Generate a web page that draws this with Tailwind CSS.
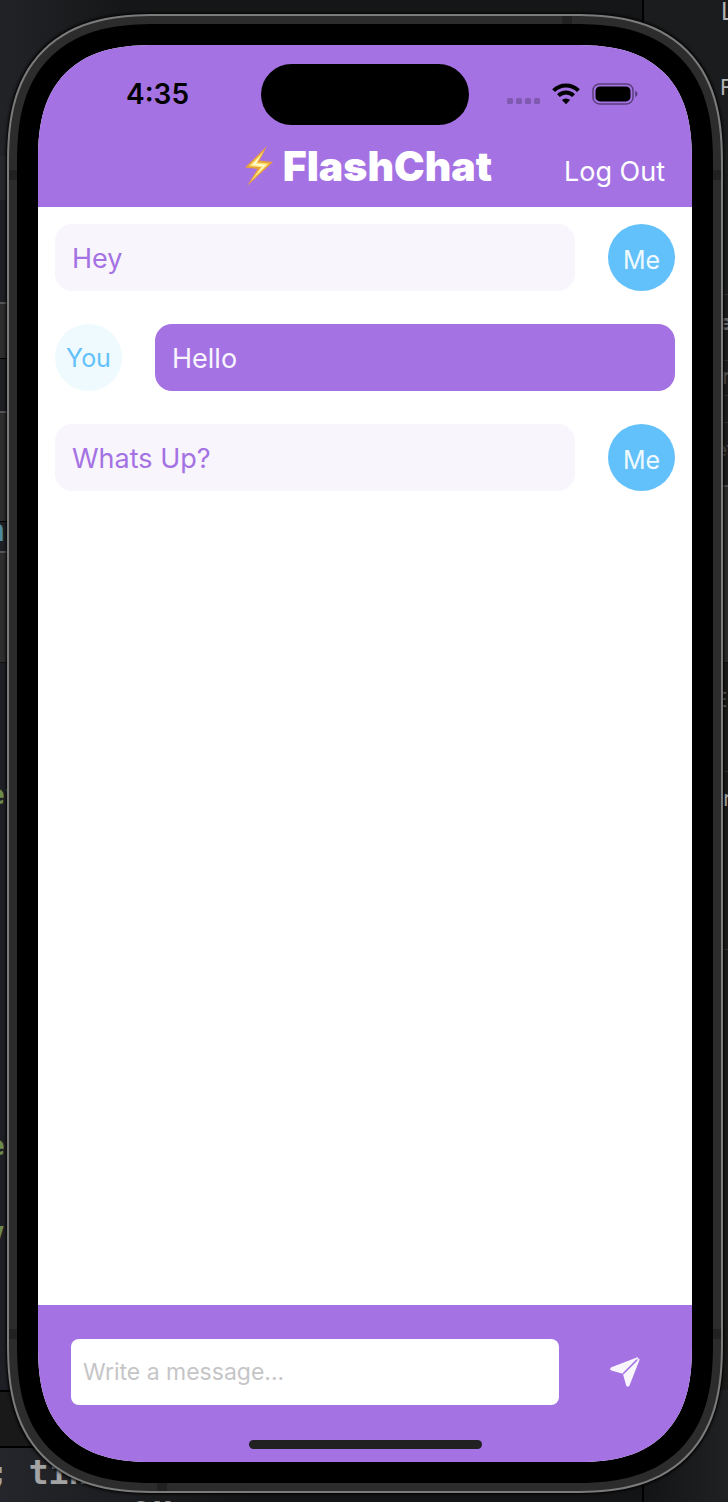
<!DOCTYPE html>
<html lang="en">
<head>
<meta charset="utf-8">
<meta name="viewport" content="width=device-width, initial-scale=1">
<title>FlashChat</title>
<script src="https://cdn.jsdelivr.net/npm/@tailwindcss/browser@4"></script>
</head>
<body class="bg-[#17181a] font-['Inter',sans-serif]">
<div class="relative isolate flex min-h-screen flex-col overflow-hidden pt-[14px] pr-[5px] pb-[9px] pl-[7px]">

  <!-- Editor windows behind the simulator -->
  <div class="absolute inset-0 -z-10 flex justify-between overflow-hidden bg-[#141516] text-[24px] leading-none" aria-hidden="true">
    <div class="flex w-[642px] flex-col">
      <div class="h-[156px] bg-linear-to-r from-[#222327] to-[#151617] to-20%"></div>
      <div class="h-[44px] bg-[#26272b]"></div>
      <div class="h-[102px] bg-[#1e1f24]"></div>
      <div class="h-[56px] border-t-2 border-[#555] bg-[#2d2d2d]"></div>
      <div class="h-[53px] border-t border-black bg-[#1e1f22]"></div>
      <div class="h-[110px] border-t-2 border-[#555] bg-[#2d2d2d]"></div>
      <div class="h-[30px] border-t border-black bg-[#1e1f24]"></div>
      <div class="h-[111px] border-t-2 border-[#555] bg-[#2d2d2d]"></div>
      <div class="h-[728px] border-t border-[#111] bg-[#1e1f25]"></div>
      <div class="h-[56px] border-t-2 border-black bg-[#191919]"></div>
      <div class="flex-1 border-t-2 border-black bg-linear-to-r from-[#25262b] to-[#131415] to-40%"></div>
    </div>
    <div class="flex flex-1 flex-col border-l-2 border-black">
      <div class="h-[294px] bg-[#1b1c1d]"></div>
      <div class="h-[66px] border-t border-[#2e2e2e] bg-[#1c1c1e]"></div>
      <div class="h-[35px] border-t border-[#2e2e2e] bg-[#1c1c1e]"></div>
      <div class="h-[27px] border-t border-[#2e2e2e] bg-[#1c1c1e]"></div>
      <div class="h-[63px] border-t border-[#2e2e2e] bg-[#1c1c1e]"></div>
      <div class="h-[177px] border-t-2 border-[#4a4a4a] bg-[#2b2b2a]"></div>
      <div class="h-[109px] border-t border-[#111] bg-[#191918]"></div>
      <div class="h-[178px] border-t border-[#2e2e2e] bg-[#191918]"></div>
      <div class="h-[441px] border-t border-[#2e2e2e] bg-[#191918]"></div>
      <div class="flex-1 bg-linear-to-r from-[#131415] to-[#202123]"></div>
    </div>
    <span class="absolute top-[516px] -left-[13px] font-['DejaVu_Sans_Mono',monospace] text-[30px] font-bold text-[#4d8ba3]">n</span>
    <span class="absolute top-[782px] -left-[11px] font-['DejaVu_Sans_Mono',monospace] text-[26px] font-bold text-[#6d8a4d]">ev</span>
    <span class="absolute top-[1133px] -left-[11px] font-['DejaVu_Sans_Mono',monospace] text-[26px] font-bold text-[#6d8a4d]">e</span>
    <span class="absolute top-[1219px] -left-[11px] font-['DejaVu_Sans_Mono',monospace] text-[26px] font-bold text-[#6d8a4d]">v</span>
    <span class="absolute top-[1456px] -left-[11px] font-['DejaVu_Sans_Mono',monospace] text-[33px] font-bold whitespace-pre text-[#a3a3a3]">; tin</span>
    <span class="absolute top-[1491px] left-[130px] font-['DejaVu_Sans_Mono',monospace] text-[36px] font-bold text-[#8c8c8c]">ou</span>
    <span class="absolute top-0 left-[721px] text-[#b5b5b5]">L</span>
    <span class="absolute top-[76px] left-[720px] text-[22px] text-[#b5b5b5]">F</span>
    <span class="absolute top-[311px] left-[719px] text-[22px] font-bold text-[#6a6a6a]">e</span>
    <span class="absolute top-[365px] left-[722px] text-[22px] text-[#565656]">r</span>
    <span class="absolute top-[438px] left-[714px] text-[22px] text-[#565656]">et</span>
    <span class="absolute top-[690px] left-[715px] text-[20px] text-[#777]">En</span>
    <span class="absolute top-[787px] left-[723px] text-[22px] text-[#aaa]">r</span>
  </div>

  <!-- Device body -->
  <div class="relative flex flex-1 flex-col rounded-[122px] bg-[#7b7b7b] p-[2px] shadow-[0_0_3px_1px_#000] supports-[corner-shape:squircle]:rounded-[150px] supports-[corner-shape:squircle]:[corner-shape:superellipse(1.35)]">
    <div class="flex flex-1 flex-col rounded-[120px] bg-[#2c2c2c] p-[8px] supports-[corner-shape:squircle]:rounded-[148px] supports-[corner-shape:squircle]:[corner-shape:superellipse(1.35)]">
      <div class="flex flex-1 flex-col rounded-[112px] bg-black p-[21px] supports-[corner-shape:squircle]:rounded-[140px] supports-[corner-shape:squircle]:[corner-shape:superellipse(1.35)]">
        <div class="flex flex-1 flex-col overflow-hidden rounded-[92px] bg-white supports-[corner-shape:squircle]:rounded-[117px] supports-[corner-shape:squircle]:[corner-shape:superellipse(1.35)]">

          <header class="bg-[#a472e3]">
            <div class="grid grid-cols-[1fr_auto_1fr] items-center pt-[19px]">
              <time class="pb-[2px] pl-[88px] text-[28px] leading-[32px] font-semibold text-black">4:35</time>
              <div class="h-[61px] w-[208px] rounded-full bg-black"></div>
              <div class="flex items-center justify-end pr-[54px] pb-[2px]">
                <svg class="h-[22px] w-[131px]" viewBox="0 0 131 22" role="img" aria-label="Wi-Fi connected, battery full">
                  <g fill="#000" fill-opacity=".22">
                    <rect x="0" y="15" width="6" height="6" rx="1.5"/><rect x="9" y="15" width="6" height="6" rx="1.5"/><rect x="18" y="15" width="6" height="6" rx="1.5"/><rect x="27" y="15" width="6" height="6" rx="1.5"/>
                  </g>
                  <g fill="none" stroke="#000" stroke-width="4">
                    <path d="M46.600 7.600a17.600 17.600 0 0 1 24.800 0"/>
                    <path d="M51.400 12.600a10.800 10.800 0 0 1 15.200 0"/>
                  </g>
                  <path d="M59 21.200l-4.100-4.100a5.800 5.800 0 0 1 8.200 0z" fill="#000"/>
                  <rect x="86" y=".9" width="40" height="20" rx="6.5" fill="none" stroke="#000" stroke-opacity=".45" stroke-width="1.5"/>
                  <rect x="88.5" y="3.4" width="35" height="15" rx="4.5" fill="#000"/>
                  <path d="M128.200 7.800c3 1.200 3 5 0 6.200z" fill="#000" fill-opacity=".45"/>
                </svg>
              </div>
            </div>
            <div class="grid h-[82px] grid-cols-[1fr_auto_1fr] items-center">
              <h1 class="col-start-2 flex items-center gap-[9px] pl-[6px] text-[41px] leading-[48px] font-black text-white">
                <svg class="h-[42px] w-[30px]" viewBox="0 0 30 42" aria-hidden="true">
                  <path d="M23 1L1 22.500l12.500 1.500L3 41l26-24-13.500-1.500z" fill="#e9a23b"/>
                  <path d="M20 6L5 21l12 1.200L7 36l18-17.500-12-1z" fill="#fde674"/>
                  <path d="M16.500 11L8 20l11 1.300-6.500 8L22 20l-10-1.200z" fill="#fffbd8"/>
                </svg>
                FlashChat
              </h1>
              <button type="button" class="mt-[12px] mr-[27px] justify-self-end text-[27px] leading-[32px] text-white">Log Out</button>
            </div>
          </header>

          <main class="flex flex-1 flex-col gap-[33px] p-[17px] text-[27px] leading-[32px]">
            <div class="flex items-center gap-[33px]">
              <p class="flex h-[67px] flex-1 items-center rounded-[17px] bg-[#f8f5fd] px-[17px] pt-[2px] text-[#a472e3]">Hey</p>
              <span class="flex size-[67px] items-center justify-center rounded-full bg-[#62c1fa] pt-[4px] text-[25px] text-[#f0fafd]">Me</span>
            </div>
            <div class="flex items-center gap-[33px]">
              <span class="flex size-[67px] items-center justify-center rounded-full bg-[#eefafd] text-[25px] text-[#62c1fa]">You</span>
              <p class="flex h-[67px] flex-1 items-center rounded-[17px] bg-[#a472e3] px-[17px] pt-[2px] text-[#f8f5fd]">Hello</p>
            </div>
            <div class="flex items-center gap-[33px]">
              <p class="flex h-[67px] flex-1 items-center rounded-[17px] bg-[#f8f5fd] px-[17px] pt-[2px] text-[#a472e3]">Whats Up?</p>
              <span class="flex size-[67px] items-center justify-center rounded-full bg-[#62c1fa] pt-[4px] text-[25px] text-[#f0fafd]">Me</span>
            </div>
          </main>

          <footer class="bg-[#a472e3] pt-[34px] pb-[13px]">
            <form class="flex items-center gap-[33px] pr-[34px] pl-[33px]">
              <input type="text" aria-label="Message" placeholder="Write a message..." class="h-[66px] min-w-0 flex-1 rounded-[8px] bg-white px-[12px] text-[23px] text-black placeholder:text-[#c5c5c7]">
              <button type="button" aria-label="Send" class="flex size-[66px] items-center justify-center text-[#f8f5fd]">
                <svg class="size-[30px]" viewBox="0 0 30 30" fill="currentColor" aria-hidden="true">
                  <path d="M26.800.4L1.400 10.200C-.2 10.900-.2 12.900 1.400 13.500L11.800 16.500c.7.200 1.200.1 1.700-.4L28.300 1.400C28.300.6 27.700.2 26.800.4z"/>
                  <path d="M29.500 3.100L19.500 28.400c-.7 1.600-2.700 1.600-3.300 0L13.300 18.300c-.2-.7 0-1.300.5-1.800L28.500 1.800c.8 0 1.200.5 1 1.300z"/>
                  <path d="M13.200 16.700L27 2.900" fill="none" stroke="#a472e3" stroke-width="1.500"/>
                </svg>
              </button>
            </form>
            <div class="mx-auto mt-[35px] h-[9px] w-[233px] rounded-full bg-[#212121]"></div>
          </footer>
        </div>
      </div>
    </div>

    <!-- Antenna bands -->
    <i class="absolute top-[156px] left-[2px] h-[10px] w-[8px] bg-[#212121]"></i>
    <i class="absolute top-[156px] right-[2px] h-[10px] w-[8px] bg-[#212121]"></i>
    <i class="absolute bottom-[154px] left-[2px] h-[10px] w-[8px] bg-[#212121]"></i>
    <i class="absolute right-[2px] bottom-[154px] h-[10px] w-[8px] bg-[#212121]"></i>
    <i class="absolute top-[2px] right-[151px] h-[8px] w-[10px] bg-[#212121]"></i>
    <i class="absolute bottom-[2px] left-[150px] h-[8px] w-[10px] bg-[#212121]"></i>
  </div>
</div>
</body>
</html>
